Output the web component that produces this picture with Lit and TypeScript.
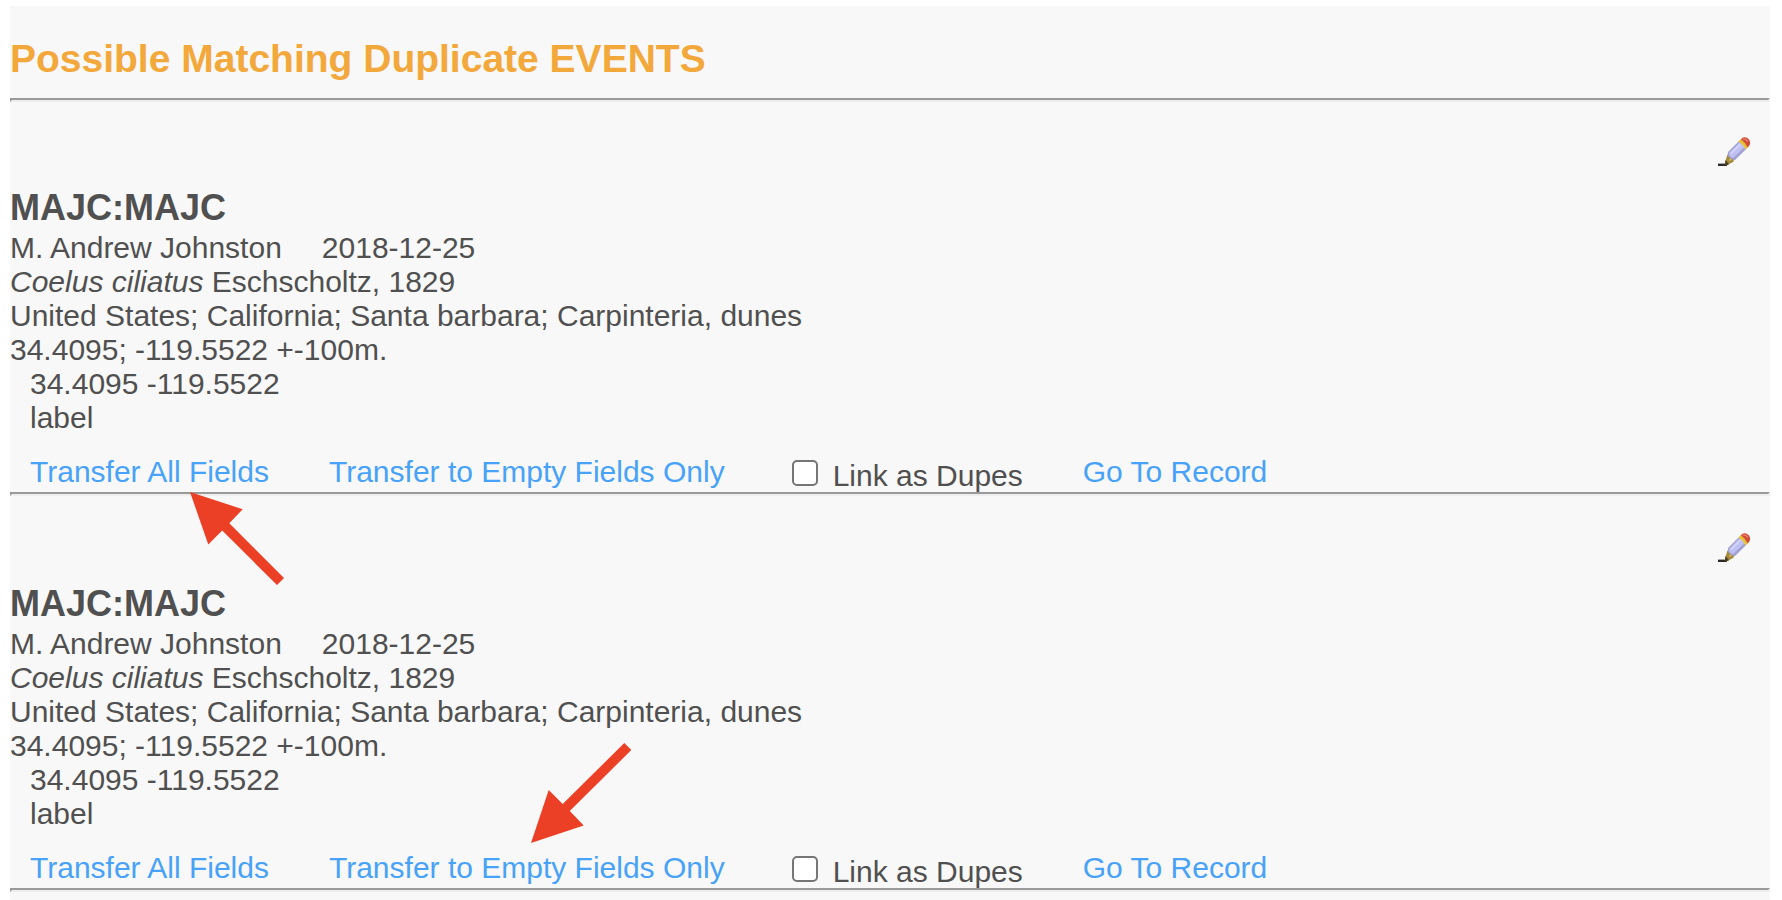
import { LitElement, html, css } from "lit";
import { customElement, property } from "lit/decorators.js";

interface EventRecord {
  id: string;
  code: string;
  collector: string;
  date: string;
  taxon: string;
  author: string;
  locality: string;
  coordinates: string;
  verbatim: string;
  note: string;
}

const base = {
  code: "MAJC:MAJC",
  collector: "M. Andrew Johnston",
  date: "2018-12-25",
  taxon: "Coelus ciliatus",
  author: "Eschscholtz, 1829",
  locality: "United States; California; Santa barbara; Carpinteria, dunes",
  coordinates: "34.4095; -119.5522 +-100m.",
  verbatim: "34.4095 -119.5522",
  note: "label",
};

const records: EventRecord[] = [
  { id: "1", ...base },
  { id: "2", ...base },
];

@customElement("duplicate-record")
class DuplicateRecord extends LitElement {
  @property({ attribute: false }) record!: EventRecord;

  static styles = css`
    :host {
      display: block;
      padding-top: 34px;
    }
    .tools {
      display: flex;
      justify-content: flex-end;
      padding-right: 20px;
    }
    .edit {
      width: 32px;
      height: 32px;
      padding: 0;
      border: 0;
      background: none;
      cursor: pointer;
    }
    .edit svg {
      display: block;
    }
    .code {
      margin: 19px 0 2px;
      font-size: 36px;
      line-height: 42px;
    }
    .line {
      display: flex;
      gap: 40px;
    }
    .indent {
      padding-left: 20px;
    }
    .actions {
      display: flex;
      align-items: flex-start;
      gap: 60px;
      padding: 20px 20px 0;
    }
    a {
      color: #47a2f8;
      text-decoration: none;
    }
    label {
      display: flex;
      gap: 15px;
      padding: 4px 0 0 7px;
      line-height: 33px;
    }
    input {
      appearance: none;
      box-sizing: border-box;
      width: 26px;
      height: 26px;
      margin: 1px 0 0;
      border: 2px solid #767676;
      border-radius: 5px;
      background: #fff;
    }
    input:checked {
      background: #47a2f8;
    }
  `;

  render() {
    const r = this.record;
    return html`
      <div class="tools">
        <button class="edit" type="button" aria-label="Edit record">
          <svg width="32" height="32" viewBox="0 0 32 32" aria-hidden="true">
            <path d="M0 28.800h9" fill="none" stroke="#2b2b2b" stroke-width="2.400" />
            <path d="M9.500 18.500 7.300 25.500 8.500 29.500 15.500 25.800 16 22z" fill="#a58a3c" />
            <path d="M7.500 24 6.800 29.800 11 28.300z" fill="#4b3f20" />
            <path d="M11.500 24.500 13.500 22.500" stroke="#e0c268" stroke-width="1.500" />
            <path d="M10 16 20.800 5.200 28 13.200 16.800 24.200 12.500 22.500 9.800 19.500z" fill="#a3a3d3" />
            <path d="M11 17 21.500 6.500 26 11.500 15 22 12 20.500z" fill="#c0c0f2" />
            <path d="M13 17.500 22.500 8" stroke="#d8d8ff" stroke-width="1.500" />
            <path d="M20.500 5.500 22.800 3q4.700 3.200 7.200 8.300l-2.300 2.200q-2.200-5-7.200-8z" fill="#e6bf2f" />
            <path d="M22.800 3.300 25 1.600q3.200-1 5.800 1.700q2.200 2.900.7 6l-1.800 2.200q-2.400-5-6.900-8.200z" fill="#d04a38" />
            <path d="M24.800 3.200q3.200-.7 5 2.300" fill="none" stroke="#ec7d6b" stroke-width="1.600" />
          </svg>
        </button>
      </div>
      <h2 class="code">${r.code}</h2>
      <div class="line"><span>${r.collector}</span><time>${r.date}</time></div>
      <div><i>${r.taxon}</i> ${r.author}</div>
      <div>${r.locality}</div>
      <div>${r.coordinates}</div>
      <div class="indent">${r.verbatim}</div>
      <div class="indent">${r.note}</div>
      <div class="actions">
        <a href="#all">Transfer All Fields</a>
        <a href="#empty">Transfer to Empty Fields Only</a>
        <label for="link-${r.id}"><input id="link-${r.id}" type="checkbox" />Link as Dupes</label>
        <a href="#record">Go To Record</a>
      </div>
    `;
  }
}

@customElement("app-root")
class AppRoot extends LitElement {
  static styles = css`
    :host {
      display: block;
      padding: 6px 12px 0 10px;
      color: #505050;
      background: #fff;
      font: 30px/34px "Liberation Sans", Arial, sans-serif;
    }
    .panel {
      position: relative;
      box-sizing: border-box;
      min-height: calc(100vh - 6px);
      background: #f8f8f8;
    }
    .title {
      margin: 0;
      padding: 30px 0 16px;
      color: #f3a83c;
      font-size: 39px;
      line-height: 46px;
    }
    .rule {
      margin: 0;
      border: 2px solid;
      border-color: #9a9a9a #eee #eee #9a9a9a;
    }
    .record-end {
      margin-bottom: 2px;
    }
    .arrow {
      position: absolute;
      fill: #eb4025;
      pointer-events: none;
    }
    .to-all {
      left: 180px;
      top: 486px;
    }
    .to-empty {
      left: 521px;
      top: 737px;
    }
  `;

  render() {
    return html`
      <main class="panel">
        <h1 class="title">Possible Matching Duplicate EVENTS</h1>
        <hr class="rule" />
        ${records.map(
          (r) => html`
            <duplicate-record .record=${r}></duplicate-record>
            <hr class="rule record-end" />
          `
        )}
        <svg class="arrow to-all" width="95" height="94" aria-hidden="true">
          <path d="M0 0 52.700 17.300 39.300 31.200 94 86 87 93 32.200 38.500 18.300 52.500z" />
        </svg>
        <svg class="arrow to-empty" width="101" height="101" aria-hidden="true">
          <path d="M0 100 17.700 47 31.700 61 93.300 0 100.300 7 38.800 68 52.700 82.500z" />
        </svg>
      </main>
    `;
  }
}
